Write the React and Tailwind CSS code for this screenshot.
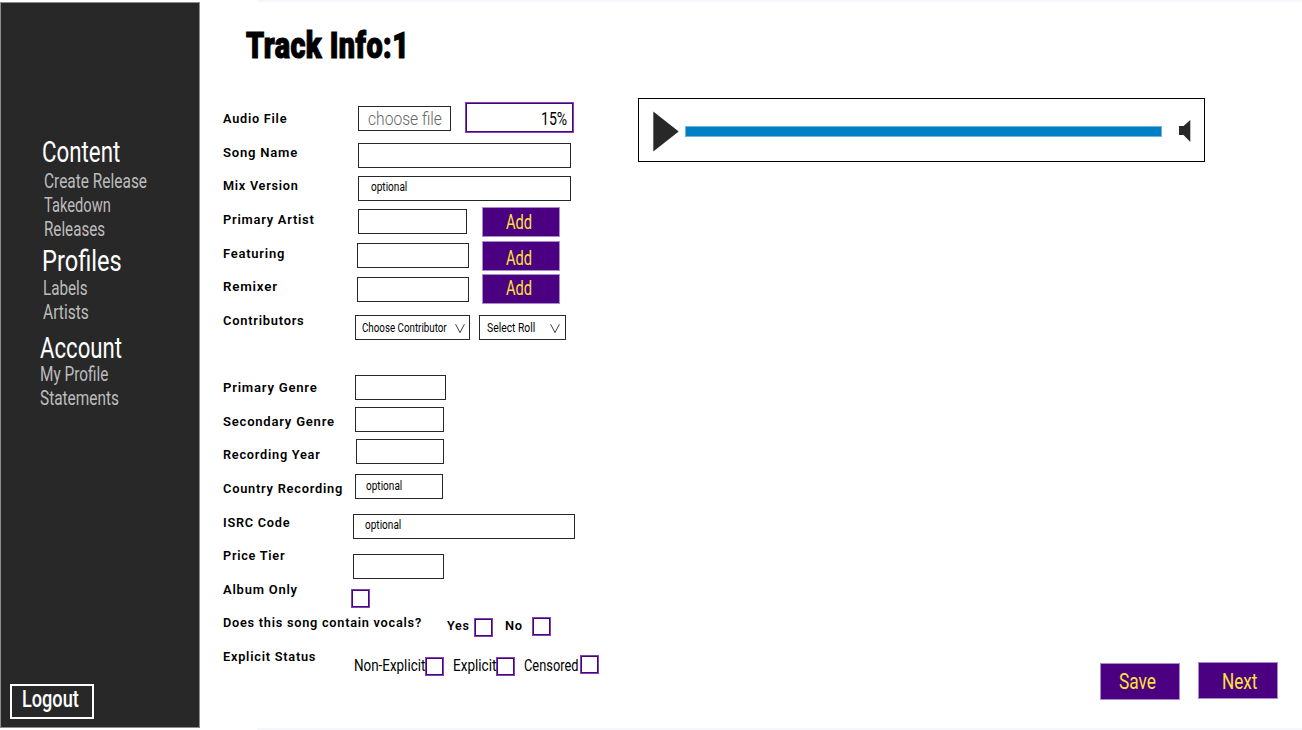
import { useLayoutEffect, useRef, useState } from "react";

// Text condensed horizontally so that it fills exactly `w` pixels.
function Fit({ w, className = "", children }) {
  const ref = useRef(null);
  const [scale, setScale] = useState(1);
  useLayoutEffect(() => {
    if (ref.current) setScale(w / ref.current.offsetWidth);
  }, [w, children]);
  return (
    <span className={`block shrink-0 leading-none whitespace-nowrap ${className}`} style={{ width: w }}>
      <span ref={ref} className="inline-block origin-left align-top" style={{ transform: `scaleX(${scale})` }}>
        {children}
      </span>
    </span>
  );
}

function NavGroup({ title, titleWidth, links, className, linkClass }) {
  return (
    <section className={className}>
      <h2>
        <Fit w={titleWidth} className="text-[30px] text-white">{title}</Fit>
      </h2>
      <ul className={`text-[#bdbdbd] ${linkClass}`}>
        {links.map(([name, w]) => (
          <li key={name} className="h-6">
            <Fit w={w} className="text-[19.5px]">{name}</Fit>
          </li>
        ))}
      </ul>
    </section>
  );
}

function Field({ className = "", children }) {
  return <div className={`flex h-[25px] shrink-0 items-start border border-[#282828] bg-white ${className}`}>{children}</div>;
}

function Check({ className = "" }) {
  return (
    <span className={`block size-[19px] shrink-0 border border-[#7d48ac] bg-white ${className}`}>
      <span className="block size-full border border-[#4b0082]" />
    </span>
  );
}

function AddButton({ className = "", textClass }) {
  return (
    <button className={`flex h-[30px] w-[78px] shrink-0 items-start border border-[#a98cc8] bg-[#4b0082] text-[#ffe23c] ${className}`}>
      <Fit w={26.5} className={`text-[20.5px] ${textClass}`}>Add</Fit>
    </button>
  );
}

function Caret({ className = "" }) {
  return (
    <svg className={`h-[9px] w-[10px] shrink-0 ${className}`} viewBox="0 0 10 9" fill="none" stroke="#282828" strokeWidth="0.9">
      <path d="M0.6 0.2 5 8.6 9.4 0.2" />
    </svg>
  );
}

const labels = [
  ["Audio File", 64], ["Song Name", 74.5], ["Mix Version", 75], ["Primary Artist", 91.5],
  ["Featuring", 61.5], ["Remixer", 54.5], ["Contributors", 81], ["", 0],
  ["Primary Genre", 94], ["Secondary Genre", 111], ["Recording Year", 97], ["Country Recording", 119.5],
  ["ISRC Code", 67], ["Price Tier", 62], ["Album Only", 74], ["Does this song contain vocals?", 198],
  ["Explicit Status", 92.5],
];

export default function App() {
  return (
    <div className="flex h-[730px] w-[1302px] overflow-hidden bg-white font-[Roboto,sans-serif] text-black">
      <aside className="mt-[2px] flex h-[726px] w-[200px] shrink-0 flex-col border border-[#8c8c8c] bg-[#282828] pt-[134px]">
        <NavGroup title="Content" titleWidth={78} className="pl-[41px]" linkClass="pl-[1.5px] pt-[5px]"
          links={[["Create Release", 103], ["Takedown", 67], ["Releases", 61.5]]} />
        <NavGroup title="Profiles" titleWidth={79.5} className="mt-[2px] pl-[40.5px]" linkClass="pl-[1px] pt-[3px]"
          links={[["Labels", 44.5], ["Artists", 45.5]]} />
        <NavGroup title="Account" titleWidth={82} className="mt-[6px] pl-[39px]" linkClass="pt-[2px]"
          links={[["My Profile", 68.5], ["Statements", 79]]} />
        <button className="mt-auto mb-[8px] ml-[9px] flex h-[35px] w-[84px] items-start border-2 border-white">
          <Fit w={57} className="mt-px ml-[9.5px] text-[24.5px] font-medium text-white">Logout</Fit>
        </button>
      </aside>

      <div className="flex w-[1102px] flex-col">
        <div className="ml-[57px] h-[2px] bg-[#f6f6fd]" />
        <h1 className="ml-[46px] h-[99px] pt-[25px]">
          <Fit w={163.5} className="text-[37.5px] font-black [-webkit-text-stroke:1.2px_black] tracking-[0.6px]">Track Info:1</Fit>
        </h1>
        <div className="flex h-[627px] items-start">
          <div className="ml-[23px] w-[127px] shrink-0 pt-px">
            {labels.map(([name, w], i) => (
              <div key={i} className="flex h-[33.64px] items-center pl-[0.4px]">
                {name && <Fit w={w + 0.5} className="text-[13.6px] font-semibold tracking-[0.8px]">{name}</Fit>}
              </div>
            ))}
          </div>

          <div className="flex w-[288px] shrink-0 flex-col pt-px">
            <div className="flex h-[31px] items-start">
              <Field className="mt-[4px] ml-[8px] w-[93px]">
                <Fit w={74} className="mt-[2px] ml-[9px] text-[19px] font-light text-[#666]">choose file</Fit>
              </Field>
              <div className="ml-[14px] h-[31px] w-[109px] border border-[#7d48ac]">
                <div className="flex h-full items-start justify-end border border-[#4b0082]">
                  <Fit w={26} className="mt-[5px] mr-[5px] text-[19px]">15%</Fit>
                </div>
              </div>
            </div>
            <Field className="mt-[10px] ml-[8px] w-[213px]" />
            <Field className="mt-[8px] ml-[8px] w-[213px]">
              <Fit w={36} className="mt-[4px] ml-[12px] text-[12px]">optional</Fit>
            </Field>
            <div className="mt-[6px] flex h-[30px] items-start">
              <Field className="mt-[2px] ml-[8px] w-[109px]" />
              <AddButton className="ml-[15px]" textClass="mt-[4px] ml-[22.5px]" />
            </div>
            <div className="mt-[4px] flex h-[30px] items-start">
              <Field className="mt-[2px] ml-[7px] w-[112px]" />
              <AddButton className="ml-[13px]" textClass="mt-[6px] ml-[23px]" />
            </div>
            <div className="mt-[3px] flex h-[30px] items-start">
              <Field className="mt-[3px] ml-[7px] w-[112px]" />
              <AddButton className="ml-[13px]" textClass="mt-[3px] ml-[22.5px]" />
            </div>
            <div className="mt-[11px] flex items-start">
              <Field className="ml-[5px] w-[115px]">
                <Fit w={84.5} className="mt-[6px] ml-[6px] text-[12.5px]">Choose Contributor</Fit>
                <Caret className="mt-[8px] ml-[8.5px]" />
              </Field>
              <Field className="ml-[9px] w-[87px]">
                <Fit w={48} className="mt-[6px] ml-[7px] text-[12.5px]">Select Roll</Fit>
                <Caret className="mt-[8px] ml-[14.5px]" />
              </Field>
            </div>
            <Field className="mt-[35px] ml-[5px] w-[91px]" />
            <Field className="mt-[7px] ml-[5px] w-[89px]" />
            <Field className="mt-[7px] ml-[6px] w-[88px]" />
            <Field className="mt-[10px] ml-[5px] w-[88px]">
              <Fit w={36} className="mt-[5px] ml-[10px] text-[12px]">optional</Fit>
            </Field>
            <Field className="mt-[15px] ml-[3px] w-[222px]">
              <Fit w={36} className="mt-[4px] ml-[11px] text-[12px]">optional</Fit>
            </Field>
            <Field className="mt-[15px] ml-[3px] w-[91px]" />
            <Check className="mt-[10px] ml-px" />
            <div className="mt-[9px] flex items-start">
              <Fit w={23} className="mt-[2px] ml-[97px] text-[13.6px] font-semibold tracking-[0.8px]">Yes</Fit>
              <Check className="mt-px ml-[4px]" />
              <Fit w={18} className="mt-[2px] ml-[12px] text-[13.6px] font-semibold tracking-[0.8px]">No</Fit>
              <Check className="ml-[9px]" />
            </div>
            <div className="mt-[18px] flex items-start">
              <Fit w={71.5} className="mt-[3px] ml-[4px] text-[16.5px]">Non-Explicit</Fit>
              <Check className="mt-[2px] -ml-[0.5px]" />
              <Fit w={43.5} className="mt-[3px] ml-[9px] text-[16.5px]">Explicit</Fit>
              <Check className="mt-[2px] -ml-[0.5px]" />
              <Fit w={54.5} className="mt-[3px] ml-[9px] text-[16.5px]">Censored</Fit>
              <Check className="ml-[1.5px]" />
            </div>
          </div>

          <div className="flex h-full grow flex-col justify-between">
            <div className="-mt-[3px] flex h-[64px] w-[567px] items-center border border-black">
              <svg className="mt-[3px] ml-[14px] h-[41px] w-[26px] shrink-0" viewBox="0 0 26 41">
                <path d="M0.3 0.5 25.7 20.5 0.3 40.5Z" fill="#282828" />
              </svg>
              <div className="mt-[3px] ml-[6px] h-[11px] w-[477px] border border-[#70b4dc] bg-[#0080c4]" />
              <svg className="mt-[2px] ml-[17px] h-[22px] w-[12px] shrink-0" viewBox="0 0 12 22">
                <path d="M0 6H4.5L11.3 0V22L4.5 15H0Z" fill="#282828" />
              </svg>
            </div>
            <div className="mb-[28px] ml-[462px] flex items-start text-[#ffe23c]">
              <button className="mt-px flex h-[37px] w-[80px] items-start border border-[#a98cc8] bg-[#4b0082]">
                <Fit w={37} className="mt-[7px] ml-[18px] text-[22px]">Save</Fit>
              </button>
              <button className="ml-[18px] flex h-[37px] w-[80px] items-start border border-[#a98cc8] bg-[#4b0082]">
                <Fit w={35} className="mt-[8px] ml-[23px] text-[22px]">Next</Fit>
              </button>
            </div>
          </div>
        </div>
        <div className="ml-[57px] h-[2px] bg-[#f6f6fd]" />
      </div>
    </div>
  );
}
